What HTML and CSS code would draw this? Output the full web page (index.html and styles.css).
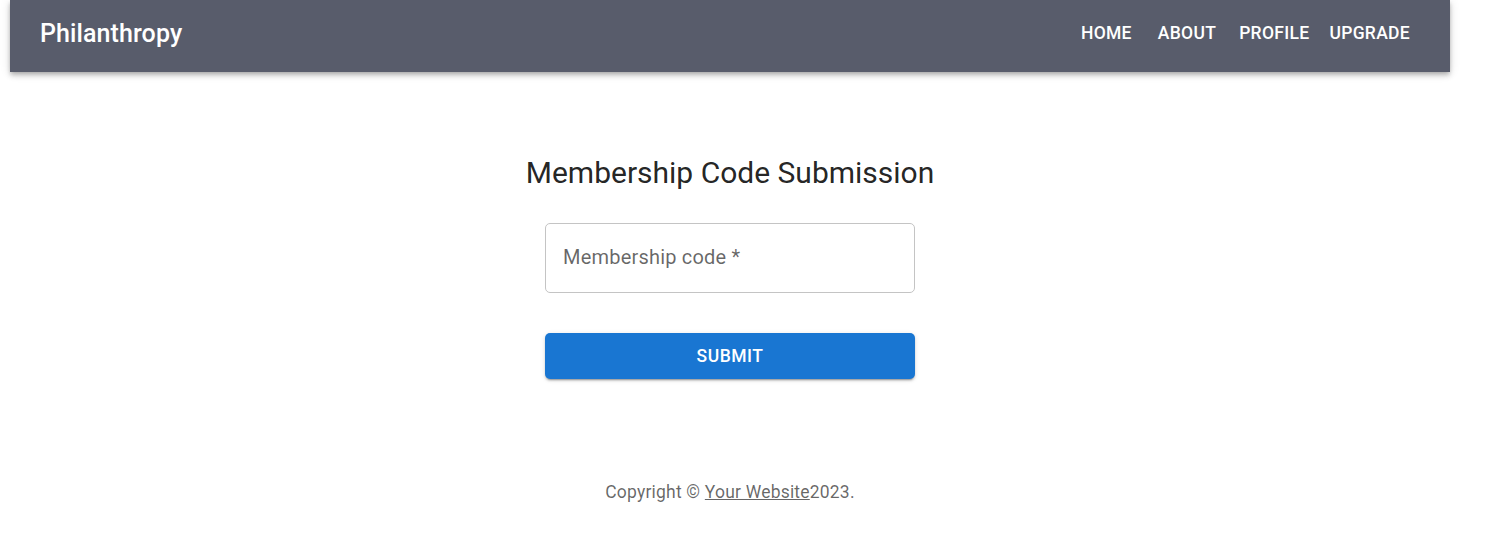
FILE: index.html
```html
<!DOCTYPE html>
<html>
<head>
<meta charset="utf-8">
<link rel="stylesheet" href="styles.css">
</head>
<body>
<div class="page">
  <header class="appbar">
    <div class="brand">Philanthropy</div>
    <nav class="nav">
      <a class="nav-btn nav-home">HOME</a>
      <a class="nav-btn nav-about">ABOUT</a>
      <a class="nav-btn nav-profile">PROFILE</a>
      <a class="nav-btn nav-upgrade">UPGRADE</a>
    </nav>
  </header>
  <main class="main">
    <h1 class="heading">Membership Code Submission</h1>
    <div class="field">
      <span class="field-label">Membership code *</span>
    </div>
    <button class="submit">SUBMIT</button>
    <p class="footer">Copyright © <a class="footer-link">Your Website</a>2023.</p>
  </main>
</div>
</body>
</html>
```

FILE: styles.css
```css
* { box-sizing: border-box; }
html, body { margin: 0; padding: 0; background: #fff; }
body { font-family: Roboto, "Liberation Sans", Arial, sans-serif; }

.page {
  width: 1440px;
  margin-left: 10px;
}

.appbar {
  height: 72px;
  background: #585c6b;
  display: flex;
  align-items: center;
  justify-content: space-between;
  padding: 0 40px 6px 30px;
  box-shadow: 0 2px 4px -1px rgba(0,0,0,0.2), 0 4px 5px 0 rgba(0,0,0,0.14), 0 1px 10px 0 rgba(0,0,0,0.12);
}

.brand {
  color: #fff;
  font-size: 25px;
  font-weight: 500;
  letter-spacing: 0.1px;
}

.nav {
  display: flex;
  align-items: center;
}

.nav-btn {
  color: #fff;
  font-size: 17.5px;
  font-weight: 500;
  letter-spacing: 0.3px;
}
.nav-about { margin-left: 26px; }
.nav-profile { margin-left: 23px; }
.nav-upgrade { margin-left: 20px; }

.main {
  display: flex;
  flex-direction: column;
  align-items: center;
  padding-top: 81px;
}

.heading {
  margin: 0;
  font-size: 30px;
  font-weight: 400;
  line-height: 40px;
  color: rgba(0,0,0,0.87);
}

.field {
  margin-top: 30px;
  width: 370px;
  height: 70px;
  border: 1px solid #c4c4c4;
  border-radius: 5px;
  display: flex;
  align-items: center;
  padding-left: 17px;
  padding-bottom: 2px;
}

.field-label {
  font-size: 20px;
  color: rgba(0,0,0,0.6);
  letter-spacing: 0.2px;
}

.submit {
  margin-top: 40px;
  width: 370px;
  height: 46px;
  border: 0;
  border-radius: 5px;
  background: #1976d2;
  color: #fff;
  font-family: inherit;
  font-size: 17.5px;
  font-weight: 500;
  letter-spacing: 0.5px;
  box-shadow: 0 3px 1px -2px rgba(0,0,0,0.2), 0 2px 2px 0 rgba(0,0,0,0.14), 0 1px 5px 0 rgba(0,0,0,0.12);
}

.footer {
  margin: 101px 0 0;
  font-size: 17.5px;
  line-height: 25px;
  color: rgba(0,0,0,0.6);
  letter-spacing: 0.2px;
}

.footer-link {
  color: inherit;
  text-decoration: underline;
  text-decoration-color: rgba(0,0,0,0.6);
}
```
